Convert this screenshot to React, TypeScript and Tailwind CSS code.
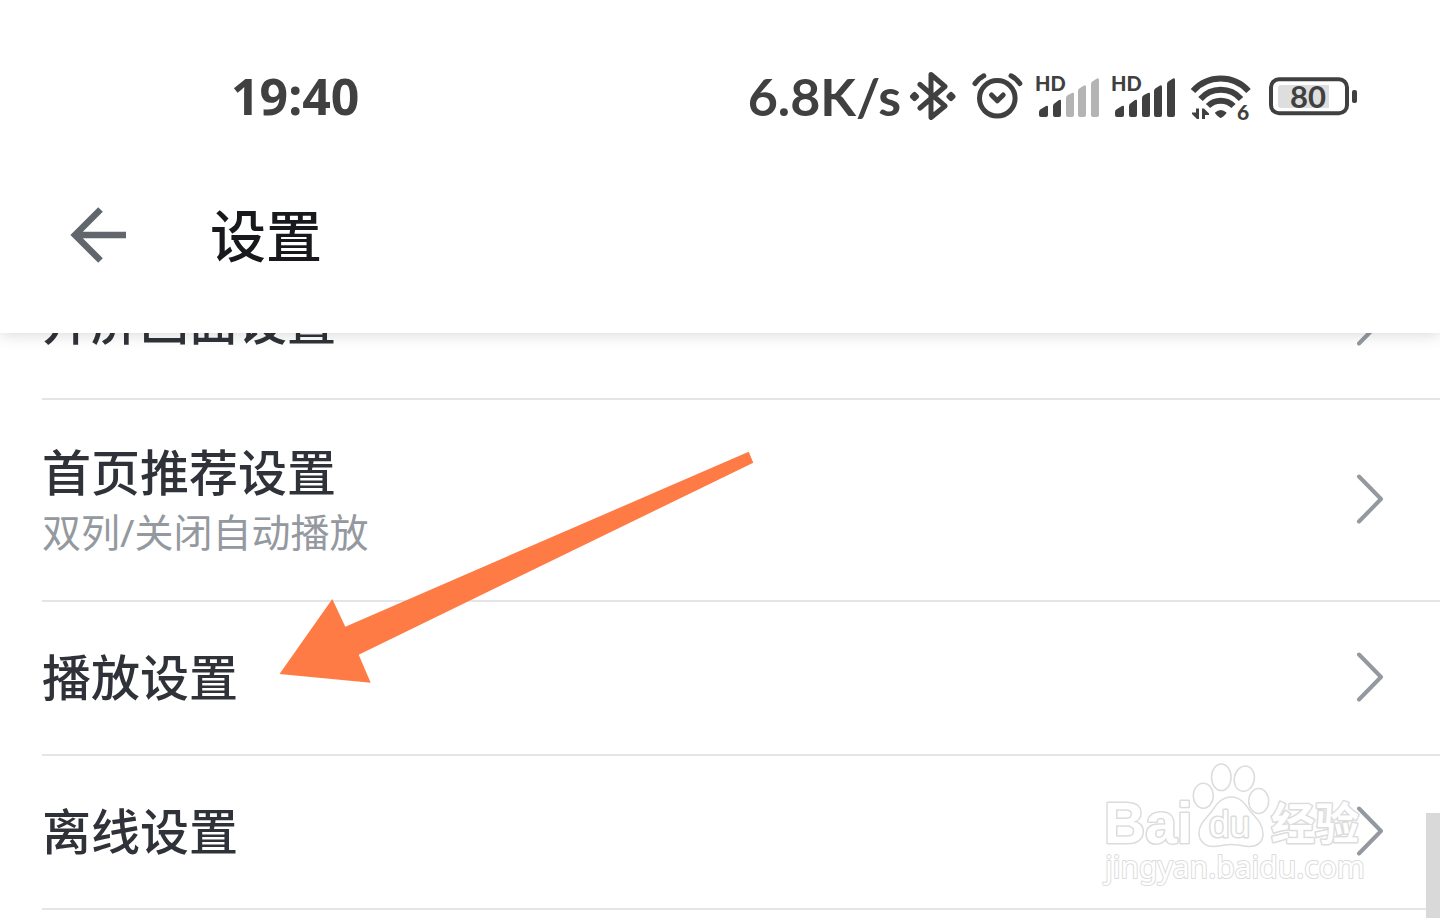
import clsx from "clsx";

type SettingItem = {
  key: string;
  title: string;
  subtitle?: string;
};

const ITEMS: SettingItem[] = [
  { key: "splash", title: "开屏画面设置" },
  { key: "home", title: "首页推荐设置", subtitle: "双列/关闭自动播放" },
  { key: "playback", title: "播放设置" },
  { key: "offline", title: "离线设置" },
];

const SIGNAL_BARS = [
  "M4 40Q4 38 6 37L11 34Q13 33 13 35V43Q13 45 11 45H6Q4 45 4 43Z",
  "M18 34Q18 32 20 31L24 28Q26 27 26 29V43Q26 45 24 45H20Q18 45 18 43Z",
  "M31 26Q31 24 33 23L37 21Q39 20 39 22V43Q39 45 37 45H33Q31 45 31 43Z",
  "M43 19Q43 17 45 16L49 13.500Q51 12.500 51 15V43Q51 45 49 45H45Q43 45 43 43Z",
  "M56 12Q56 10 58 9L62 6.500Q64 5.500 64 8V43Q64 45 62 45H58Q56 45 56 43Z",
];

function BluetoothIcon() {
  return (
    <svg className="h-12 w-[50px]" viewBox="0 0 50 48" fill="none" aria-hidden>
      <path
        d="M11 12.500L36 34L22 45.500V2.500L36 14.500L11 36"
        stroke="currentColor"
        strokeWidth="5"
        strokeLinecap="round"
        strokeLinejoin="round"
      />
      <path
        d="M5.500 22.500L7.500 24.500L5.500 26.500L3.500 24.500ZM42 22.500L44 24.500L42 26.500L40 24.500Z"
        stroke="currentColor"
        strokeWidth="5"
        strokeLinejoin="round"
      />
    </svg>
  );
}

function AlarmIcon() {
  return (
    <svg
      className="h-12 w-[52px]"
      viewBox="0 0 52 48"
      fill="none"
      stroke="currentColor"
      strokeWidth="5"
      strokeLinecap="round"
      strokeLinejoin="round"
      aria-hidden
    >
      <circle cx="26.300" cy="26.300" r="17.800" />
      <path d="M20.500 23L26.300 28.800L32.200 23" />
      <path d="M4 11.500Q7.500 6.500 12.800 3.800" />
      <path d="M48.800 11.500Q45.300 6.500 40 3.800" />
    </svg>
  );
}

function SignalIcon({ strength }: { strength: number }) {
  return (
    <svg className="h-12 w-16 overflow-visible" viewBox="0 0 64 48" aria-hidden>
      <text x="0" y="19" className="fill-current font-['Lato',sans-serif] text-[20px] font-black">
        HD
      </text>
      {SIGNAL_BARS.map((d, i) => (
        <path key={d} d={d} className={clsx(i < strength ? "fill-current" : "fill-[#b4b4b4]")} />
      ))}
    </svg>
  );
}

function WifiIcon() {
  return (
    <svg className="h-12 w-[66px] overflow-visible" viewBox="0 0 66 48" fill="none" aria-hidden>
      <g stroke="currentColor" strokeWidth="6">
        <path d="M6 19A37 37 0 0 1 61.500 19" />
        <path d="M13.500 27A27 27 0 0 1 54 27" />
        <path d="M21 34A18 18 0 0 1 46.500 34" />
      </g>
      <path d="M28 40.500Q33.700 35.500 39.500 40.500Q39.500 42 34.800 45.500Q33.700 46.300 32.600 45.500Q28 42 28 40.500Z" fill="currentColor" />
      <path d="M9 36.500H12V47H10L5 42V40.500H9ZM15 47V36.500H17L22 41.500V43H18V47Z" fill="currentColor" />
      <text x="50" y="48" className="fill-current font-['Lato',sans-serif] text-[21px] font-black">
        6
      </text>
    </svg>
  );
}

function BatteryIcon({ level }: { level: number }) {
  return (
    <svg className="h-12 w-[92px]" viewBox="0 0 92 48" fill="none" aria-hidden>
      <rect x="6" y="7.300" width="76" height="34" rx="8" stroke="currentColor" strokeWidth="4" />
      <path d="M16 13H64V36H16Q13 36 13 33V16Q13 13 16 13Z" fill="#dedede" />
      <rect x="87" y="18" width="5" height="13" rx="2" fill="currentColor" />
      <text x="43" y="36" textAnchor="middle" className="fill-current font-['Lato',sans-serif] text-[31px] font-bold">
        {level}
      </text>
    </svg>
  );
}

function StatusBar() {
  return (
    <div className="flex h-12 items-center justify-between pr-[83px] pl-[231px] text-[#404040]">
      <time className="text-[50px] leading-none font-bold">19:40</time>
      <div className="flex items-center gap-3">
        <div className="flex items-center gap-2">
          <span className="font-['Lato',sans-serif] text-[52px] leading-none font-bold">6.8K/s</span>
          <BluetoothIcon />
        </div>
        <AlarmIcon />
        <SignalIcon strength={2} />
        <SignalIcon strength={5} />
        <WifiIcon />
        <BatteryIcon level={80} />
      </div>
    </div>
  );
}

function SettingRow({ item }: { item: SettingItem }) {
  return (
    <li className="ml-[42px] border-b-2 border-[#e3e5e7]">
      <a
        href={`#${item.key}`}
        className={clsx("flex items-center justify-between pr-14 pb-0.5", item.subtitle ? "h-[200px]" : "h-[152px]")}
      >
        <span className={clsx("flex flex-col", item.subtitle && "pt-1.5")}>
          <span className="text-[49px] leading-[60px] font-medium text-[#2f3238]">{item.title}</span>
          {item.subtitle && (
            <span className="text-[39px] leading-[60px] text-[#9499a0]">{item.subtitle}</span>
          )}
        </span>
        <svg
          className="h-[50px] w-7 shrink-0"
          viewBox="0 0 28 50"
          fill="none"
          stroke="#9499a0"
          strokeWidth="4"
          strokeLinecap="round"
          strokeLinejoin="round"
          aria-hidden
        >
          <path d="M3 2.500L25 25L3 47.500" />
        </svg>
      </a>
    </li>
  );
}

function PointerArrow() {
  return (
    <svg
      className="pointer-events-none absolute top-[451px] left-[279px] h-[232px] w-[475px]"
      viewBox="0 0 475 232"
      aria-hidden
    >
      <path d="M0.500 223L53.300 148L66.300 175.700L469.700 0.700L474.300 11.700L79.700 203.700L91.700 231.700Z" fill="#ff7b45" />
    </svg>
  );
}

function Watermark() {
  return (
    <svg
      className="pointer-events-none absolute top-[760px] right-[70px] h-[130px] w-[270px] overflow-visible"
      viewBox="0 0 270 130"
      fill="#fff"
      stroke="#dcdcdc"
      strokeWidth="1.500"
      strokeLinejoin="round"
      aria-hidden
    >
      <text x="4" y="83" strokeWidth="3" className="font-['Liberation_Sans',sans-serif] text-[57px] font-bold [paint-order:stroke]">
        Bai
      </text>
      <ellipse cx="103.300" cy="35.700" rx="10" ry="12.500" />
      <ellipse cx="121.300" cy="17.300" rx="9.800" ry="13.300" />
      <ellipse cx="144.300" cy="18.700" rx="10" ry="12.700" transform="rotate(12 144.300 18.700)" />
      <ellipse cx="158.700" cy="41" rx="10" ry="12.500" />
      <path d="M131.300 37C141 37 146 45 150 51C155 57 163 63 163 74C163 82 157 87 149 86.500C142 86 138 84.500 131 84.500C124 84.500 120 86.500 113 86.500C105 86.500 99 81 99 73C99 63 107 58 112 51C116 45 121 37 131.300 37Z" />
      <text x="109" y="77" strokeWidth="3" className="font-['Liberation_Sans',sans-serif] text-[37px] [paint-order:stroke]">
        du
      </text>
      <text x="171" y="80" strokeWidth="3" className="text-[44px] font-bold [paint-order:stroke]">
        经验
      </text>
      <text x="5" y="118" strokeWidth="2" className="text-[30px] [paint-order:stroke]">
        jingyan.baidu.com
      </text>
    </svg>
  );
}

export default function App() {
  return (
    <div className="relative min-h-screen overflow-hidden bg-white font-['Noto_Sans','Noto_Sans_CJK_SC',sans-serif]">
      <header className="relative z-10 bg-white pt-[72px] shadow-[0_0_16px_rgba(0,0,0,0.18)]">
        <StatusBar />
        <div className="mt-4 flex h-[197px] items-center gap-[84px] pl-[70px]">
          <button type="button" aria-label="返回">
            <svg className="h-14 w-14" viewBox="0 0 56 56" fill="none" stroke="#61666d" strokeWidth="6.500" aria-hidden>
              <path d="M30.500 2.500L5 28L30.500 53.500M5 28H56" />
            </svg>
          </button>
          <h1 className="text-[56px] leading-none font-medium text-[#18191c]">设置</h1>
        </div>
      </header>

      {/* list is scrolled part-way under the header */}
      <main className="-mt-[87px]">
        <ul>
          {ITEMS.map((item) => (
            <SettingRow key={item.key} item={item} />
          ))}
        </ul>
      </main>

      <Watermark />
      <PointerArrow />
      <div className="absolute top-[813px] right-0 bottom-0 w-[14px] bg-[#d9d9d9]" />
    </div>
  );
}
